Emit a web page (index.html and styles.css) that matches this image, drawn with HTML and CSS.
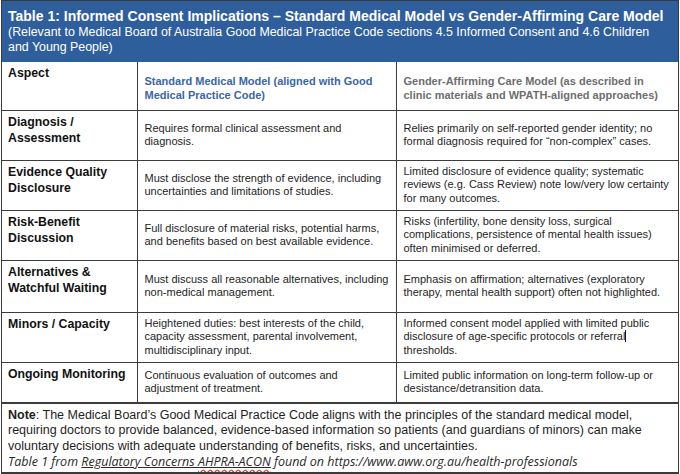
FILE: index.html
```html
<!DOCTYPE html>
<html lang="en">
<head>
<meta charset="utf-8">
<title>Table 1: Informed Consent Implications</title>
<link rel="stylesheet" href="styles.css">
</head>
<body>
<div class="figure">
  <div class="banner">
    <div class="banner-title">Table 1: Informed Consent Implications – Standard Medical Model vs Gender-Affirming Care Model</div>
    <div class="banner-sub">(Relevant to Medical Board of Australia Good Medical Practice Code sections 4.5 Informed Consent and 4.6 Children and Young People)</div>
  </div>
  <table class="grid">
    <colgroup>
      <col class="c1"><col class="c2"><col class="c3">
    </colgroup>
    <tr class="r-head">
      <th class="aspect">Aspect</th>
      <th class="h-std">Standard Medical Model (aligned with Good Medical Practice Code)</th>
      <th class="h-gac">Gender-Affirming Care Model (as described in clinic materials and WPATH-aligned approaches)</th>
    </tr>
    <tr class="r-50">
      <td class="aspect">Diagnosis / Assessment</td>
      <td>Requires formal clinical assessment and diagnosis.</td>
      <td>Relies primarily on self-reported gender identity; no formal diagnosis required for “non-complex” cases.</td>
    </tr>
    <tr class="r-50">
      <td class="aspect">Evidence Quality Disclosure</td>
      <td>Must disclose the strength of evidence, including uncertainties and limitations of studies.</td>
      <td>Limited disclosure of evidence quality; systematic reviews (e.g. Cass Review) note low/very low certainty for many outcomes.</td>
    </tr>
    <tr class="r-50">
      <td class="aspect">Risk-Benefit Discussion</td>
      <td>Full disclosure of material risks, potential harms, and benefits based on best available evidence.</td>
      <td>Risks (infertility, bone density loss, surgical complications, persistence of mental health issues) often minimised or deferred.</td>
    </tr>
    <tr class="r-52">
      <td class="aspect">Alternatives &amp; Watchful Waiting</td>
      <td>Must discuss all reasonable alternatives, including non-medical management.</td>
      <td>Emphasis on affirmation; alternatives (exploratory therapy, mental health support) often not highlighted.</td>
    </tr>
    <tr class="r-50">
      <td class="aspect">Minors / Capacity</td>
      <td>Heightened duties: best interests of the child, capacity assessment, parental involvement, multidisciplinary input.</td>
      <td>Informed consent model applied with limited public disclosure of age-specific protocols or referral<span class="caret"></span> thresholds.</td>
    </tr>
    <tr class="r-40">
      <td class="aspect">Ongoing Monitoring</td>
      <td>Continuous evaluation of outcomes and adjustment of treatment.</td>
      <td>Limited public information on long-term follow-up or desistance/detransition data.</td>
    </tr>
  </table>
  <div class="note">
    <p class="note-text"><b>Note</b>: The Medical Board’s Good Medical Practice Code aligns with the principles of the standard medical model, requiring doctors to provide balanced, evidence-based information so patients (and guardians of minors) can make voluntary decisions with adequate understanding of benefits, risks, and uncertainties.</p>
    <p class="source">Table 1 from <span class="link">Regulatory Concerns <span class="spell">AHPRA-ACON</span></span> found on https://www.aww.org.au/health-professionals</p>
  </div>
</div>
</body>
</html>
```
FILE: styles.css
```css
html, body {
  margin: 0;
  padding: 0;
  background: #ffffff;
}

body {
  font-family: "Liberation Sans", Arial, sans-serif;
  color: #1e1e1e;
}

.figure {
  width: 676px;
  height: 471px;
  margin: 0 0 0 1px;
  border: 1px solid #3a3a3a;
  border-bottom-width: 2px;
  overflow: hidden;
  display: flex;
  flex-direction: column;
}

.banner {
  background: #2f5e9d;
  color: #ffffff;
  height: 61px;
  padding: 7px 8px 0 6px;
  box-sizing: border-box;
}

.banner-title {
  font-weight: bold;
  font-size: 14px;
  line-height: 17px;
}

.banner-sub {
  font-size: 12.4px;
  line-height: 15px;
}

.grid {
  border-collapse: collapse;
  width: 100%;
  table-layout: fixed;
}

.c1 { width: 135px; }
.c2 { width: 259px; }
.c3 { width: auto; }

.grid th,
.grid td {
  border: 1px solid #3c3c3c;
  padding: 0 4px 0 7px;
  text-align: left;
  vertical-align: middle;
  font-size: 11px;
  line-height: 13.5px;
  font-weight: normal;
}

.grid tr > :first-child { border-left: none; }
.grid tr > :last-child { border-right: none; }
.grid tr:first-child > * { border-top: none; }

.grid .aspect {
  vertical-align: top;
  font-weight: bold;
  font-size: 12.3px;
  line-height: 16.5px;
  padding: 3px 2px 0 6px;
  color: #111;
}

.r-head { height: 48px; }
.r-50 { height: 50px; }
.r-52 { height: 52px; }
.r-40 { height: 40px; }

.grid .h-std {
  color: #3a66a6;
  font-weight: bold;
  padding-top: 6px;
}

.grid .h-gac {
  color: #6e6e6e;
  font-weight: bold;
  padding-top: 6px;
}

.caret {
  display: inline-block;
  width: 1px;
  height: 12px;
  background: #111;
  vertical-align: -2px;
}

.note {
  border-top: 1px solid #3c3c3c;
  padding: 4px 8px 0 6px;
  flex: 1;
}

.note-text {
  margin: 0;
  font-size: 12.5px;
  line-height: 15.5px;
  color: #1e1e1e;
}

.source {
  margin: 0;
  font-family: "Open Sans", "Noto Sans", sans-serif;
  font-style: italic;
  font-size: 12.5px;
  line-height: 15.5px;
  color: #2a2a2a;
}

.link {
  text-decoration: underline;
}

.spell {
  text-decoration: underline wavy #d04040;
  text-underline-offset: 3px;
}
```
